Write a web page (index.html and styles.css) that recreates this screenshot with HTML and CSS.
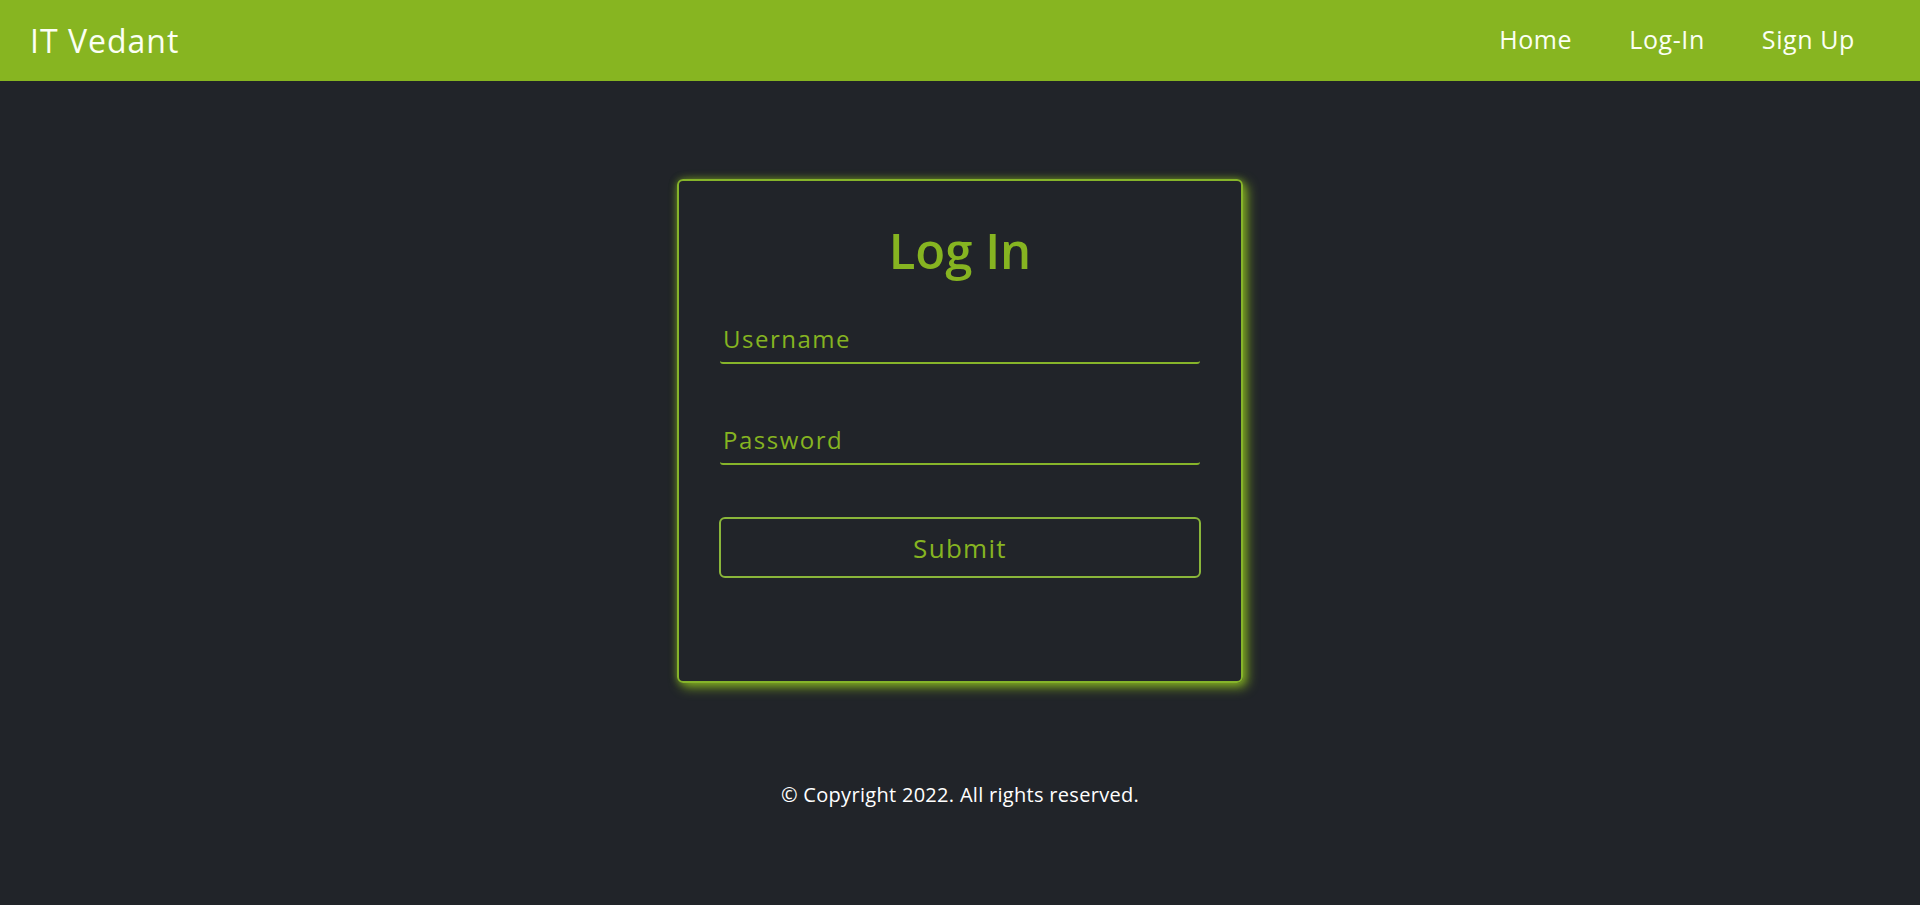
FILE: index.html
```html
<!DOCTYPE html>
<html lang="en">
<head>
<meta charset="utf-8">
<title>IT Vedant - Log In</title>
<link rel="stylesheet" href="styles.css">
</head>
<body>
<nav class="navbar">
  <a class="brand" href="#">IT Vedant</a>
  <ul class="nav-links">
    <li><a href="#">Home</a></li>
    <li><a href="#">Log-In</a></li>
    <li><a href="#">Sign Up</a></li>
  </ul>
</nav>
<main class="main">
  <div class="card">
    <h1 class="title">Log In</h1>
    <form class="form">
      <input class="field field-user" type="text" placeholder="Username">
      <input class="field field-pass" type="password" placeholder="Password">
      <button class="submit" type="button">Submit</button>
    </form>
  </div>
</main>
<footer class="footer">© Copyright 2022. All rights reserved.</footer>
</body>
</html>
```
FILE: styles.css
```css
* { box-sizing: border-box; }
html, body {
  margin: 0;
  padding: 0;
  background: #212429;
  font-family: "Open Sans", "Noto Sans", sans-serif;
}
body { min-height: 905px; }

.navbar {
  height: 81px;
  background: #87b521;
  display: flex;
  align-items: center;
  justify-content: space-between;
  padding: 0 65px 0 30px;
}
.brand {
  color: #fbfff4;
  text-decoration: none;
  font-size: 32px;
  letter-spacing: 1px;
  line-height: 1;
}
.nav-links {
  list-style: none;
  margin: 0;
  padding: 0;
  display: flex;
  gap: 57px;
}
.nav-links a {
  color: #fbfff4;
  text-decoration: none;
  font-size: 25px;
  line-height: 1;
  letter-spacing: 0.6px;
}

.main {
  display: flex;
  justify-content: center;
  padding-top: 98px;
}
.card {
  width: 566px;
  height: 504px;
  border: 2px solid #86b42a;
  border-radius: 6px;
  box-shadow: 4px 4px 12px rgba(134, 180, 33, 0.95), 0 0 7px rgba(134, 180, 33, 0.5);
  padding: 39px 41px 0;
}
.title {
  margin: 0;
  text-align: center;
  color: #86b421;
  font-family: "Open Sans", sans-serif;
  font-weight: 600;
  font-size: 49px;
  line-height: 60px;
}
.form {
  display: flex;
  flex-direction: column;
  margin-top: 43px;
}
.field {
  display: block;
  width: 100%;
  background: transparent;
  border: none;
  border-bottom: 2px solid #86b42a;
  border-radius: 3px;
  outline: none;
  color: #86b421;
  font-family: "Open Sans", sans-serif;
  font-size: 24px;
  letter-spacing: 1.5px;
  line-height: 30px;
  height: 41px;
  padding: 0 3px 9px;
}
.field::placeholder { color: #86b421; opacity: 1; }
.field-pass { margin-top: 60px; }
.submit {
  margin: 52px -1px 0;
  height: 61px;
  background: transparent;
  border: 2px solid #8ab63a;
  border-radius: 6px;
  color: #86b421;
  font-family: "Open Sans", sans-serif;
  font-size: 26px;
  letter-spacing: 1.3px;
  cursor: pointer;
}

.footer {
  margin-top: 97px;
  text-align: center;
  color: #ffffff;
  font-size: 20px;
  letter-spacing: 0.3px;
  line-height: 30px;
}
```
